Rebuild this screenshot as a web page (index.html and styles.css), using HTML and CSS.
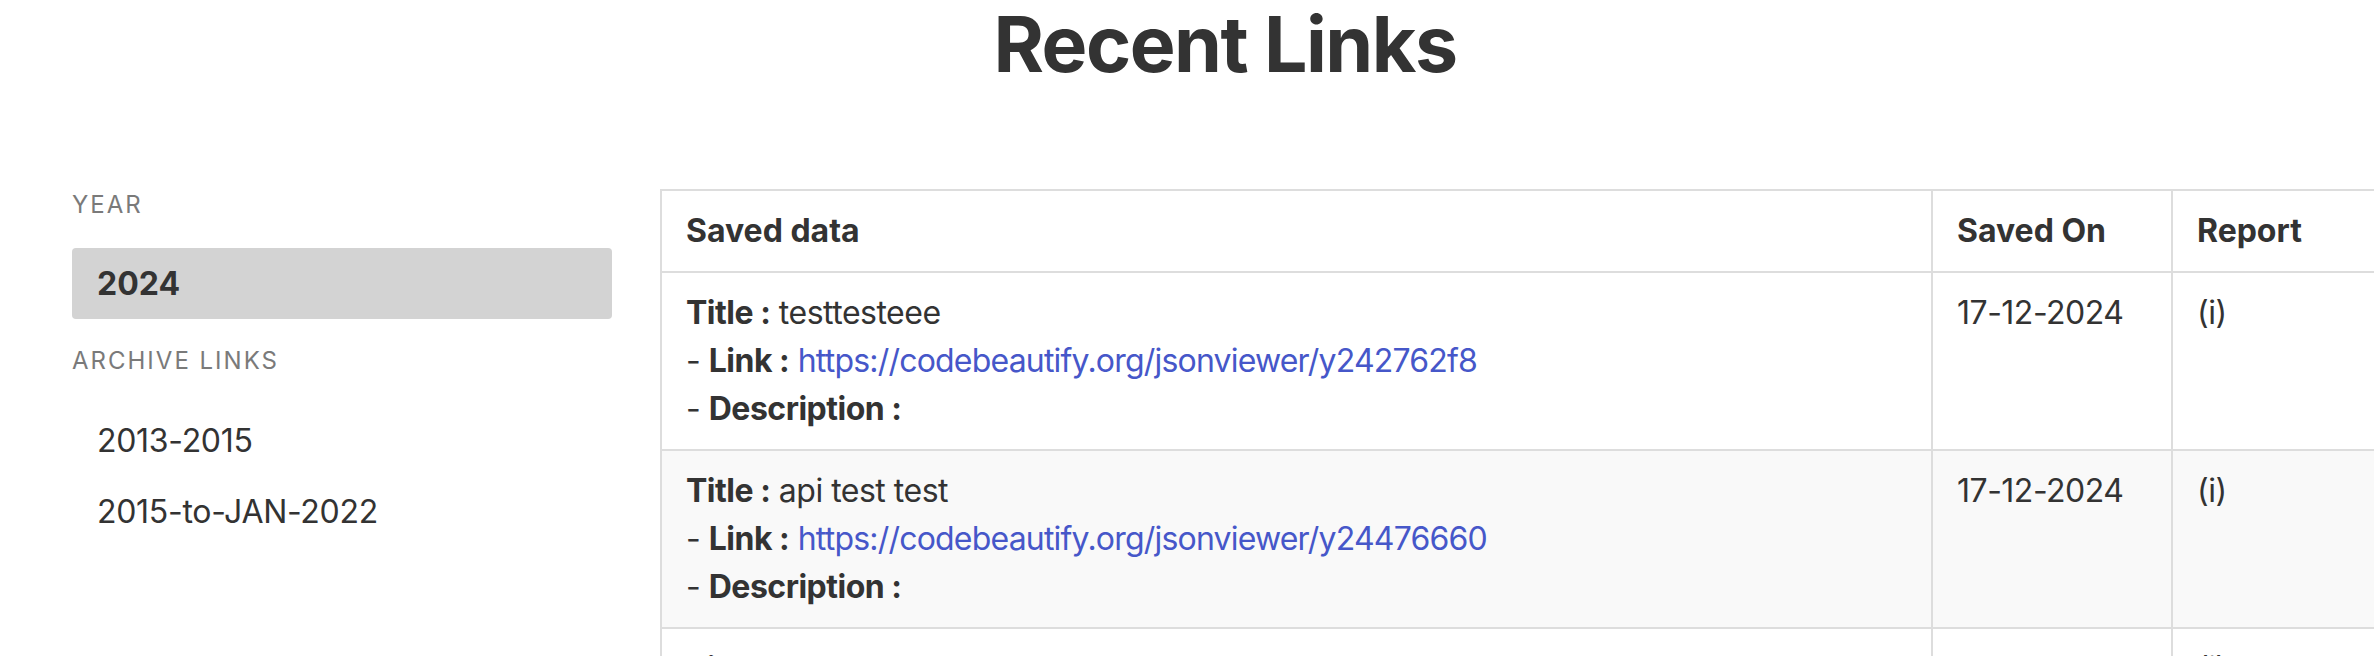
FILE: index.html
```html
<!DOCTYPE html>
<html lang="en">
<head>
<meta charset="utf-8">
<title>Recent Links</title>
<link rel="stylesheet" href="styles.css">
</head>
<body>
<header class="page-header">
  <h1 class="page-title">Recent Links</h1>
</header>
<div class="layout">
  <aside class="sidebar">
    <div class="side-label">YEAR</div>
    <a class="side-item side-item--active" href="#">2024</a>
    <div class="side-label side-label--archive">ARCHIVE LINKS</div>
    <a class="side-item" href="#">2013-2015</a>
    <a class="side-item" href="#">2015-to-JAN-2022</a>
  </aside>
  <main class="content">
    <table class="links-table">
      <colgroup>
        <col class="col-data">
        <col class="col-date">
        <col class="col-report">
      </colgroup>
      <thead>
        <tr>
          <th>Saved data</th>
          <th>Saved On</th>
          <th>Report</th>
        </tr>
      </thead>
      <tbody>
        <tr>
          <td><b>Title :</b> testtesteee<br>- <b>Link :</b> <a class="link" href="#">https://codebeautify.org/jsonviewer/y242762f8</a><br>- <b>Description :</b></td>
          <td>17-12-2024</td>
          <td>(i)</td>
        </tr>
        <tr>
          <td><b>Title :</b> api test test<br>- <b>Link :</b> <a class="link" href="#">https://codebeautify.org/jsonviewer/y24476660</a><br>- <b>Description :</b></td>
          <td>17-12-2024</td>
          <td>(i)</td>
        </tr>
        <tr>
          <td><b>Title :</b> test<br>- <b>Link :</b> <a class="link" href="#">https://codebeautify.org/jsonviewer/y24476650</a><br>- <b>Description :</b></td>
          <td>17-12-2024</td>
          <td>(i)</td>
        </tr>
      </tbody>
    </table>
  </main>
</div>
</body>
</html>
```
FILE: styles.css
```css
html, body {
  margin: 0;
  padding: 0;
  overflow: hidden;
  background: #ffffff;
}

body {
  font-family: Inter, "Noto Sans", "Liberation Sans", sans-serif;
  font-size: 32px;
  line-height: 48px;
  color: #333333;
}

.page-header {
  padding-left: 76px;
  text-align: center;
}

.page-title {
  margin: 5px 0 0;
  font-size: 77px;
  line-height: 78px;
  font-weight: 700;
  letter-spacing: -1.5px;
  color: #333333;
}

.layout {
  display: flex;
  align-items: flex-start;
  margin-top: 106px;
  padding-left: 72px;
  gap: 48px;
}

.sidebar {
  display: flex;
  flex-direction: column;
  width: 540px;
  flex: none;
}

.side-label {
  font-size: 24px;
  line-height: 32px;
  letter-spacing: 2px;
  color: #7a7a7a;
  margin-bottom: 27px;
}

.side-label--archive {
  margin-top: 26px;
  margin-bottom: 28px;
}

.side-item {
  display: block;
  padding: 12px 25px 11px;
  border-radius: 4px;
  color: #333333;
  letter-spacing: -0.3px;
  text-decoration: none;
}

.side-item--active {
  background: #d3d3d3;
  font-weight: 700;
  letter-spacing: 0;
}

.content {
  flex: none;
}

.links-table {
  border-collapse: collapse;
  table-layout: fixed;
  width: 1780px;
}

.col-data { width: 1271px; }
.col-date { width: 240px; }
.col-report { width: 269px; }

.links-table th,
.links-table td {
  border: 2px solid #dddddd;
  padding: 16px 24px;
  text-align: left;
  vertical-align: top;
}

.links-table th {
  font-weight: 700;
}

.links-table td {
  letter-spacing: -0.5px;
}

.links-table b {
  font-weight: 700;
}

.links-table tbody tr:nth-child(even) {
  background: #f9f9f9;
}

.link {
  color: #4657c9;
  letter-spacing: -0.8px;
  text-decoration: none;
}
```
